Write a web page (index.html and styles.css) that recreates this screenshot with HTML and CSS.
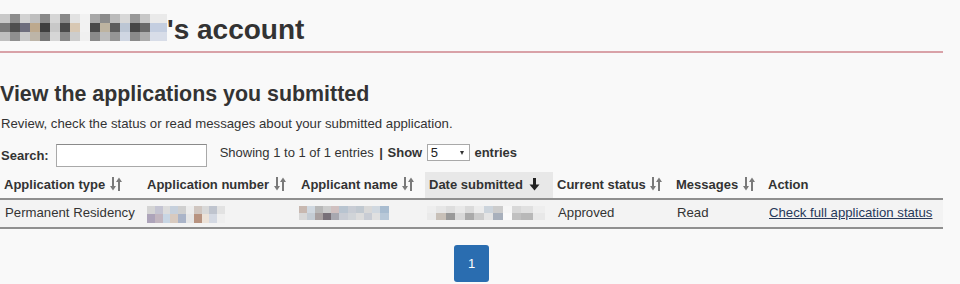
FILE: index.html
```html
<!DOCTYPE html>
<html lang="en">
<head>
    <meta charset="UTF-8">
    <title>My account</title>
    <link rel="stylesheet" href="styles.css">
</head>
<body>
    <div class="page">
        <h1 class="account-title"><span class="mosaic mosaic-name"></span>'s account</h1>

        <h2>View the applications you submitted</h2>
        <p class="intro">Review, check the status or read messages about your submitted application.</p>

        <div class="table-tools">
            <label class="search">Search: <input type="text"></label>
            <div class="info">Showing 1 to 1 of 1 entries <b class="sep">|</b> <b>Show</b> <span class="select-box"><select><option>5</option><option>10</option><option>25</option></select></span> <b>entries</b></div>
        </div>

        <table class="apps">
            <colgroup>
                <col class="c-type">
                <col class="c-number">
                <col class="c-name">
                <col class="c-date">
                <col class="c-status">
                <col class="c-msg">
                <col class="c-action">
            </colgroup>
            <thead>
                <tr>
                    <th>Application type <svg class="sort" viewBox="0 0 12 14"><path d="M3 0v10"/><path class="head" d="M0 9h6l-3 4.5z"/><path d="M9 4v10"/><path class="head" d="M6 5h6l-3-4.5z"/></svg></th>
                    <th>Application number <svg class="sort" viewBox="0 0 12 14"><path d="M3 0v10"/><path class="head" d="M0 9h6l-3 4.5z"/><path d="M9 4v10"/><path class="head" d="M6 5h6l-3-4.5z"/></svg></th>
                    <th>Applicant name <svg class="sort" viewBox="0 0 12 14"><path d="M3 0v10"/><path class="head" d="M0 9h6l-3 4.5z"/><path d="M9 4v10"/><path class="head" d="M6 5h6l-3-4.5z"/></svg></th>
                    <th class="sorted">Date submitted <svg class="sort-down" viewBox="0 0 10 13"><path d="M3.5 0h3v7h-3z"/><path d="M0 6.5h10l-5 6z"/></svg></th>
                    <th>Current status <svg class="sort" viewBox="0 0 12 14"><path d="M3 0v10"/><path class="head" d="M0 9h6l-3 4.5z"/><path d="M9 4v10"/><path class="head" d="M6 5h6l-3-4.5z"/></svg></th>
                    <th>Messages <svg class="sort" viewBox="0 0 12 14"><path d="M3 0v10"/><path class="head" d="M0 9h6l-3 4.5z"/><path d="M9 4v10"/><path class="head" d="M6 5h6l-3-4.5z"/></svg></th>
                    <th>Action</th>
                </tr>
            </thead>
            <tbody>
                <tr>
                    <td>Permanent Residency</td>
                    <td><span class="mosaic mosaic-number"></span></td>
                    <td><span class="mosaic mosaic-applicant"></span></td>
                    <td><span class="mosaic mosaic-date"></span></td>
                    <td>Approved</td>
                    <td>Read</td>
                    <td><a href="#">Check full application status</a></td>
                </tr>
            </tbody>
        </table>

        <div class="pager">
            <a class="page-btn" href="#">1</a>
        </div>
    </div>
</body>
</html>
```

FILE: styles.css
```css
/* General Styles */
body {
    margin: 0;
    background-color: #f9f9f9;
    color: #333;
    font-family: "Liberation Sans", Arial, sans-serif;
    font-size: 13px;
}

.page {
    width: 943px;
}

.account-title {
    margin: 14px 0 0;
    padding-bottom: 5px;
    font-size: 28px;
    line-height: 32px;
    border-bottom: 2px solid #d9a2a8;
}

h2 {
    margin: 28px 0 0;
    font-size: 21.4px;
    line-height: 26px;
}

.intro {
    margin: 8px 0 0 1px;
    font-size: 13.2px;
    line-height: 18px;
}

/* Table toolbar */
.table-tools {
    display: flex;
    align-items: center;
    margin-top: 11px;
    height: 23px;
}

.search {
    display: flex;
    align-items: center;
    font-weight: bold;
    margin-left: 1px;
}

.search input {
    width: 151px;
    height: 23px;
    box-sizing: border-box;
    margin: 0 0 0 7px;
    border: 1px solid #a9a9a9;
    border-top-color: #8a8a8a;
    background: #fff;
}

.info {
    align-self: flex-start;
    height: 17px;
    line-height: 17px;
    margin-left: 13px;
    white-space: nowrap;
}

.sep {
    margin: 0 1px 0 2px;
}

.select-box {
    position: relative;
    display: inline-block;
    height: 17px;
    margin: 0 1px;
    vertical-align: top;
}

.select-box select {
    appearance: none;
    -webkit-appearance: none;
    display: block;
    width: 43px;
    height: 17px;
    margin: 0;
    padding: 0 0 0 3px;
    border: 1px solid #a9a9a9;
    border-radius: 0;
    background: #fff;
    color: #222;
    font-family: "Liberation Sans", Arial, sans-serif;
    font-size: 13px;
    line-height: 15px;
}

.select-box::after {
    content: "";
    position: absolute;
    right: 6px;
    top: 7px;
    border-left: 2.5px solid transparent;
    border-right: 2.5px solid transparent;
    border-top: 4px solid #333;
}

/* Applications table */
.apps {
    width: 943px;
    margin-top: 5px;
    border-collapse: collapse;
    table-layout: fixed;
}

.c-type { width: 143px; }
.c-number { width: 154px; }
.c-name { width: 128px; }
.c-date { width: 128px; }
.c-status { width: 119px; }
.c-msg { width: 92px; }
.c-action { width: 179px; }

.apps th,
.apps td {
    padding: 5px 4px;
    line-height: 16px;
    text-align: left;
    white-space: nowrap;
}

.apps th {
    font-weight: bold;
    border-bottom: 2px solid #8f8f8f;
}

.apps th.sorted {
    background-color: #e8e8e8;
}

.apps td {
    padding: 5px 4px 6px 5px;
    font-size: 13.2px;
    background-color: #f3f3f3;
    border-bottom: 2px solid #8f8f8f;
}

.apps a {
    color: #27395a;
    text-decoration: underline;
}

.sort {
    width: 12px;
    height: 14px;
    margin-left: 1px;
    vertical-align: -2px;
}

.sort path {
    stroke: #7a7a7a;
    stroke-width: 2;
    fill: none;
}

.sort path.head {
    stroke: none;
    fill: #7a7a7a;
}

.sort-down {
    width: 11px;
    height: 13px;
    margin-left: 2px;
    vertical-align: -2px;
    fill: #222;
}

/* Blurred personal data */
.mosaic {
    display: inline-block;
    background-repeat: no-repeat;
}

.mosaic-name {
    width: 167px;
    height: 27px;
    vertical-align: -2px;
    background-image:
        linear-gradient(90deg, #c9c9c9 0 6%, #8d8d8d 6% 12%, #d2d2d2 12% 18%, #bfbfbf 18% 24%, #8a8a8a 24% 30%, #d6d6d6 30% 36%, #8a8a8a 36% 42%, #e2e2e2 42% 48%, #f2f2f2 48% 54%, #a8a8a8 54% 60%, #8c8c8c 60% 66%, #bbbbbb 66% 72%, #d8d8d8 72% 78%, #999999 78% 84%, #c8c8c8 84% 90%, #eaeaea 90% 100%),
        linear-gradient(90deg, #7a7a7a 0 6%, #4f4f4f 6% 12%, #6e6e7d 12% 18%, #bda98e 18% 24%, #3f3f3f 24% 30%, #c8c8c8 30% 36%, #4a4a4a 36% 42%, #d8c8b4 42% 48%, #f2f2f2 48% 54%, #4a4a4a 54% 60%, #bdb3a0 60% 66%, #5c5c5c 66% 72%, #bcc6d4 72% 78%, #474747 78% 84%, #6a6a6a 84% 90%, #c4cee0 90% 100%),
        linear-gradient(90deg, #bfbfbf 0 6%, #8f8f8f 6% 12%, #c9c9c9 12% 18%, #bdb5a8 18% 24%, #777777 24% 30%, #d6d6d6 30% 36%, #888888 36% 42%, #cdcdcd 42% 48%, #f0f0f0 48% 54%, #8a8a8a 54% 60%, #bcbcbc 60% 66%, #959595 66% 72%, #cfd6e2 72% 78%, #8a8a8a 78% 84%, #acacac 84% 90%, #d8dde8 90% 100%);
    background-size: 100% 9px, 100% 9px, 100% 9px;
    background-position: 0 0, 0 9px, 0 18px;
}

.mosaic-number {
    width: 78px;
    height: 17px;
    margin: -3px 0 -3px -1px;
    vertical-align: -3px;
    background-image:
        linear-gradient(90deg, #d4d4d4 0 10%, #c4c4d2 10% 20%, #dcdcdc 20% 30%, #c6d0dc 30% 40%, #cfcfcf 40% 50%, #ececec 50% 60%, #d0c6c0 60% 70%, #d8d8d8 70% 80%, #bfc4ce 80% 90%, #e2e2e2 90% 100%),
        linear-gradient(90deg, #ada4ba 0 10%, #c2b6c0 10% 20%, #c8d6e4 20% 30%, #d8cabf 30% 40%, #aab4c8 40% 50%, #e6e6e6 50% 60%, #b89380 60% 70%, #ece2d8 70% 80%, #d4d9e3 80% 90%, #efefef 90% 100%);
    background-size: 100% 8px, 100% 9px;
    background-position: 0 0, 0 8px;
}

.mosaic-applicant {
    width: 90px;
    height: 14px;
    margin: -2px 0 -2px -3px;
    vertical-align: -1px;
    background-image:
        linear-gradient(90deg, #c8b8b0 0 9%, #d0d8e0 9% 18%, #b8b8b8 18% 27%, #cccccc 27% 36%, #d0c0c0 36% 45%, #b8c4d0 45% 54%, #c8ccd4 54% 63%, #c0c8d0 63% 72%, #d8d8d8 72% 81%, #d0d8e0 81% 90%, #a8bcd0 90% 100%),
        linear-gradient(90deg, #d8d8d8 0 9%, #c4ccd4 9% 18%, #a8a0a0 18% 27%, #787078 27% 36%, #a8a8b0 36% 45%, #c8ccd4 45% 54%, #d0d4d8 54% 63%, #dcdcdc 63% 72%, #c8ccd4 72% 81%, #e0e0e0 81% 90%, #b8c8d8 90% 100%);
    background-size: 100% 7px, 100% 7px;
    background-position: 0 0, 0 7px;
}

.mosaic-date {
    width: 118px;
    height: 14px;
    margin: -2px 0 -2px -3px;
    vertical-align: -1px;
    background-image:
        linear-gradient(90deg, #eeeeee 0 8%, #e6e6e6 8% 16%, #dddddd 16% 24%, #e8e8e8 24% 32%, #dadada 32% 40%, #ececec 40% 48%, #ccd4dc 48% 56%, #cccccc 56% 64%, #f6f6f6 64% 72%, #d8d8d8 72% 80%, #e0e0e0 80% 90%, #eeeeee 90% 100%),
        linear-gradient(90deg, #eaeaea 0 8%, #c8c0b8 8% 16%, #999999 16% 24%, #d8d8d8 24% 32%, #aaaaaa 32% 40%, #cccccc 40% 48%, #e4e4e4 48% 56%, #a8b0bc 56% 64%, #fafafa 64% 72%, #c0c0c0 72% 80%, #b8b8b8 80% 90%, #e8e8e8 90% 100%);
    background-size: 100% 7px, 100% 7px;
    background-position: 0 0, 0 7px;
}

/* Pagination */
.pager {
    display: flex;
    justify-content: center;
    margin-top: 16px;
}

.page-btn {
    display: flex;
    align-items: center;
    justify-content: center;
    width: 35px;
    height: 37px;
    border-radius: 3px;
    background-color: #2a6db0;
    color: #fff;
    text-decoration: none;
    font-size: 13px;
}
```
